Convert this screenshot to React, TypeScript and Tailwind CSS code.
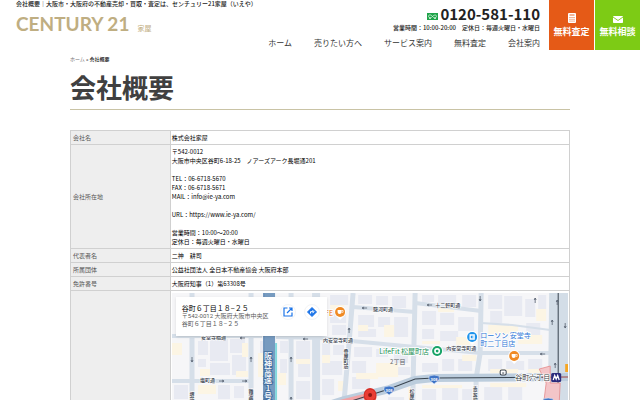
import React from 'react';

const navItems = [
  { text: 'ホーム', url: '#home' },
  { text: '売りたい方へ', url: '#sell' },
  { text: 'サービス案内', url: '#service' },
  { text: '無料査定', url: '#assessment' },
  { text: '会社案内', url: '#company' },
];

const address = [
  '〒542-0012',
  '大阪市中央区谷町6-18-25　ノアーズアーク長堀通201',
  '',
  'TEL：06-6718-5670',
  'FAX：06-6718-5671',
  'MAIL：info@ie-ya.com',
  '',
  'URL：https://www.ie-ya.com/',
  '',
  '営業時間：10:00〜20:00',
  '定休日：毎週火曜日・水曜日',
];

const rows = [
  { label: '会社名', lines: ['株式会社家屋'] },
  { label: '会社所在地', lines: address },
  { label: '代表者名', lines: ['二神　耕司'] },
  { label: '所属団体', lines: ['公益社団法人 全日本不動産協会 大阪府本部'] },
  { label: '免許番号', lines: ['大阪府知事（1）第63308号'] },
];

// x, y, width, height
const buildings = [
  [26, 48, 10, 14], [38, 46, 18, 22], [58, 46, 15, 14], [38, 70, 20, 12], [60, 62, 14, 20],
  [26, 66, 8, 8], [46, 92, 12, 14], [62, 93, 10, 12], [2, 92, 14, 14], [88, 48, 3, 22],
  [124, 48, 14, 18], [126, 70, 12, 14], [124, 88, 14, 18], [108, 48, 8, 12], [108, 66, 7, 14],
  [150, 50, 8, 14], [161, 52, 11, 10], [150, 68, 20, 14], [150, 86, 12, 16], [158, 2, 18, 10],
  [158, 18, 16, 12], [160, 32, 14, 10], [186, 2, 14, 9], [204, 3, 12, 9], [220, 3, 14, 12],
  [186, 22, 16, 12], [206, 24, 12, 10], [222, 24, 14, 20], [186, 36, 18, 8], [182, 54, 18, 10],
  [204, 56, 12, 8], [222, 58, 14, 12], [180, 68, 14, 12], [180, 84, 18, 12], [218, 74, 20, 8],
  [250, 2, 12, 7], [266, 2, 18, 10], [290, 2, 14, 12], [250, 18, 14, 14], [268, 20, 14, 12],
  [286, 24, 16, 14], [250, 36, 12, 10], [268, 38, 18, 10], [250, 70, 16, 9], [270, 66, 12, 12],
  [286, 66, 14, 12], [316, 2, 14, 14], [332, 3, 18, 20], [353, 6, 10, 18], [366, 2, 8, 14],
  [318, 18, 12, 12], [354, 30, 14, 12], [316, 66, 14, 12], [334, 68, 18, 9], [356, 66, 14, 12],
  [250, 96, 14, 12], [270, 94, 16, 14], [290, 96, 10, 12], [312, 94, 18, 14], [336, 94, 14, 14],
  [188, 108, 20, 20], [216, 104, 16, 14], [2, 112, 14, 20], [28, 110, 22, 20], [56, 112, 16, 18],
];

const shops = [
  [0, 50, 10, 12], [28, 76, 10, 7], [70, 50, 6, 14], [26, 92, 18, 9], [64, 78, 12, 6],
  [86, 60, 5, 24], [106, 80, 8, 12], [124, 66, 14, 5], [150, 62, 8, 8], [166, 88, 8, 10],
  [158, 12, 14, 5], [186, 32, 10, 6], [212, 32, 10, 12], [204, 70, 22, 14], [184, 80, 22, 6],
  [266, 12, 16, 7], [250, 48, 18, 3], [284, 44, 14, 8], [316, 32, 30, 9], [346, 42, 24, 9],
  [364, 16, 10, 12], [290, 62, 14, 6], [318, 76, 28, 4], [356, 76, 16, 4], [250, 92, 40, 3],
  [318, 90, 36, 4], [180, 110, 10, 20], [236, 94, 5, 12],
];

const arrows = [
  [20, 66, 'M0-2V3M-1 1L0 3L1 1'],
  [79, 66, 'M0 3V-2M-1 0L0-2L1 0'],
  [119, 66, 'M0 3V-2M-1 0L0-2L1 0'],
  [119, 106, 'M0 3V-2M-1 0L0-2L1 0'],
  [50, 88, 'M-3 0H2M0-1L2 0L0 1'],
  [73, 88, 'M-3 0H2M0-1L2 0L0 1'],
  [70, 45, 'M3 0H-2M0-1L-2 0L0 1'],
  [133, 46, 'M3 0H-2M0-1L-2 0L0 1'],
  [192, 15, 'M3 0H-2M0-1L-2 0L0 1'],
  [257, 12, 'M3 0H-2M0-1L-2 0L0 1'],
  [177, 37, 'M0 3V-2M-1 0L0-2L1 0'],
  [308, 5, 'M0-2V3M-1 1L0 3L1 1'],
  [363, 7, 'M0 3V-2M-1 0L0-2L1 0'],
  [385, 9, 'M0 3V-2M-1 0L0-2L1 0'],
  [380, 29, 'M0 3V-2M-1 0L0-2L1 0'],
  [393, 32, 'M0-2V3M-1 1L0 3L1 1'],
  [383, 72, 'M0 3V-2M-1 0L0-2L1 0'],
  [370, 61, 'M3 0H-2M0-1L-2 0L0 1'],
] as const;

const streets = [
  { text: '安堂寺橋通', x: 29, y: 46 },
  { text: '塩町通', x: 28, y: 89 },
  { text: '駿河町通', x: 201, y: 18 },
  { text: '十二軒町通', x: 263, y: 14 },
  { text: '内安堂寺町通', x: 151, y: 49 },
  { text: '内安堂寺町通', x: 274, y: 57 },
];

function Shield({ x, y }: { x: number; y: number }) {
  return (
    <g transform={`translate(${x} ${y})`}>
      <path d="M-5-3Q0-5 5-3Q6 0 4 2Q2 3 0 5Q-2 3-4 2Q-6 0-5-3Z" fill="#3f74c6" stroke="#dfe9f7" strokeWidth="0.6" />
      <text y="2" textAnchor="middle" className="text-[4px] font-bold" fill="#fff">308</text>
    </g>
  );
}

function Pin({ x, y, color, children }: { x: number; y: number; color: string; children: React.ReactNode }) {
  return (
    <g transform={`translate(${x} ${y})`}>
      <path d="M0 8L-3 5Q-6 3-6 0A6 6 0 0 1 6 0Q6 3 3 5Z" fill="#fff" />
      <circle r="5" fill={color} />
      {children}
    </g>
  );
}

function Cup() {
  return (
    <>
      <path d="M-2.500-2H1.500V0Q1.500 2-0.500 2Q-2.500 2-2.500 0Z" fill="#fff" />
      <path d="M1.500-1.500H3V0.300H1.500" fill="none" stroke="#fff" strokeWidth="0.7" />
    </>
  );
}

function MapDrawing() {
  return (
    <svg viewBox="0 0 396 225" className="block w-full" role="img" aria-label="谷町６丁目１８−２５の地図">
      <rect width="396" height="225" fill="#f6f6f8" />
      {buildings.map(([x, y, w, h], index) => (
        <rect key={index} x={x} y={y} width={w} height={h} fill="#e8eaf2" />
      ))}
      {shops.map(([x, y, w, h], index) => (
        <rect key={index} x={x} y={y} width={w} height={h} fill="#fcf5e4" />
      ))}

      {/* Side streets */}
      <g fill="none" stroke="#d6dfe9" strokeWidth="5">
        <path d="M20 0V225M79 0V225M119 0V225M181 0L177 50L172 108L168 225M243 0L241 87L239 225M309 0L308 60L304 85L302 225" />
        <path d="M144 0V225" strokeWidth="8" />
        <path d="M0 43H90M0 88H79M0 140H396" strokeWidth="4" />
        <path d="M181 14L243 19M243 10L309 18M104 44L148 45L243 54L309 60H378" strokeWidth="4" />
        <path d="M309 30L340 32L378 37" strokeWidth="2" />
      </g>
      <path d="M377 0H396V225H370L376 84Z" fill="#d3dde7" />

      {/* Expressway */}
      <path d="M97 0V225" stroke="#779bc0" strokeWidth="12" />
      <path d="M92 0V225" stroke="#6a90b8" strokeWidth="1" />
      <path d="M104 50V225" stroke="#83d8dc" strokeWidth="2" />

      {/* Route 308 and the subway line */}
      <path d="M150 114L172 107L217 96L243 87L262 85L396 84" fill="none" stroke="#bccddd" strokeWidth="8" />
      <path d="M148 114L200 101" stroke="#f2a4a6" strokeWidth="4" />
      <path d="M148 118L217 96L243 86L262 85L396 84" fill="none" stroke="#38434e" strokeWidth="1" />
      <path d="M386 0V84L382 225" fill="none" stroke="#38434e" strokeWidth="1" />
      <path d="M367 76L378 73V90H388L386 130L370 122L374 90Z" fill="#f3c5c8" stroke="#e58a8c" strokeWidth="0.8" />
      <path d="M396 71H393V79H396Z" fill="#f6a622" />
      <path d="M388 84H396" stroke="#e58a8c" strokeWidth="1" />

      {arrows.map(([x, y, d], index) => (
        <path key={index} d={d} transform={`translate(${x} ${y})`} fill="none" stroke="#55606e" strokeWidth="0.8" />
      ))}

      <g fill="#37414d" stroke="#fff" strokeWidth="1" paintOrder="stroke" className="text-[5px] font-medium">
        {streets.map((street, index) => (
          <text key={index} x={street.x} y={street.y}>{street.text}</text>
        ))}
        <text x="174" y="56" className="[writing-mode:vertical-rl]">骨屋町筋</text>
        <text x="240" y="96" className="[writing-mode:vertical-rl]">松屋町筋</text>
        <text x="303" y="93" className="[writing-mode:vertical-rl]">善安筋</text>
        <text x="20" y="99" className="[writing-mode:vertical-rl]">堺筋</text>
        <text x="79" y="96" className="[writing-mode:vertical-rl]">難波筋</text>
      </g>
      <text x="96" y="59" fill="#fff" stroke="#456f9f" strokeWidth="2" paintOrder="stroke" className="text-[8px] font-medium [text-orientation:upright] [writing-mode:vertical-rl]">
        阪神高速1号環状線
      </text>

      <Shield x={217} y={97} />
      <Shield x={262} y={86} />
      <Shield x={376} y={109} />

      {/* Places */}
      <g stroke="#fff" strokeWidth="1.5" paintOrder="stroke" className="text-[7px]">
        <text x="161" y="23" textAnchor="end" fill="#e8710a">CAFE</text>
        <text x="257" y="61" textAnchor="end" fill="#1b8f56">LifeFit 松屋町店</text>
        <text x="308" y="45" fill="#2f78d8">ローソン 安堂寺</text>
        <text x="308" y="53" fill="#2f78d8">町二丁目店</text>
        <text x="378" y="87" textAnchor="end" fill="#3c4043">谷町六丁目</text>
      </g>
      <text x="218" y="71" fill="#5f6368" className="text-[6px]">2丁目</text>

      <Pin x={168} y={19} color="#f08a24"><Cup /></Pin>
      <Pin x={342} y={63} color="#f08a24"><Cup /></Pin>
      <Pin x={265} y={58} color="#16a366">
        <circle r="2.2" fill="none" stroke="#fff" strokeWidth="1.6" />
      </Pin>
      <Pin x={300} y={44} color="#1e93ec">
        <path d="M-2-2H2L2 2H-2Z" fill="none" stroke="#fff" strokeWidth="1.3" />
        <path d="M0 0H2" stroke="#fff" />
      </Pin>

      <rect x="328" y="77" width="6" height="5" rx="1.5" fill="#fff" stroke="#37414d" />
      <path d="M330 80H332" stroke="#37414d" />
      <rect x="379" y="80" width="10" height="9" rx="1.5" fill="#2b2b7c" />
      <path d="M381 87L382.500 82.500L384 86L385.500 82.500L387 87" fill="none" stroke="#fff" strokeWidth="1.3" />

      <path d="M198 118L193 108Q191 105 192 101A6 6 0 0 1 204 101Q205 105 203 108Z" fill="#e53a33" />
      <circle cx="198" cy="102" r="6" fill="#ea3c34" stroke="#b9241f" strokeWidth="0.6" />
      <circle cx="198" cy="102" r="2" fill="#8f1713" />
    </svg>
  );
}

function MapCard() {
  return (
    <div className="absolute top-1 left-1 flex w-[151px] items-start bg-white pt-[7px] pr-1 pb-2 pl-[6px] text-[6px] leading-[8px] whitespace-nowrap text-[#5b5b5b] shadow-sm">
      <div className="w-[98px]">
        <p className="text-[7px] text-black">谷町６丁目１８−２５</p>
        <p className="font-['Roboto','Noto_Sans_CJK_JP',sans-serif]">〒542-0012 大阪府大阪市中央区</p>
        <p>谷町６丁目１８−２５</p>
      </div>
      <a href="#open-map" aria-label="拡大地図を表示" className="flex size-4 items-center justify-center rounded-full border border-gray-100">
        <svg viewBox="0 0 10 10" className="size-[10px]" fill="none" stroke="#1a73e8" strokeWidth="1.2">
          <path d="M4.500 1H1V9H9V5.500M6 1H9V4M9 1L4 6" />
        </svg>
      </a>
      <a href="#route" aria-label="ルート" className="ml-2 flex size-4 items-center justify-center rounded-full border border-gray-100">
        <svg viewBox="0 0 10 10" className="size-[10px]">
          <path d="M5 0.500L9.500 5L5 9.500L0.500 5Z" fill="#1a73e8" stroke="#1a73e8" strokeLinejoin="round" />
          <path d="M3.500 6.500V4.700H6.500M5.500 3.200L7 4.700L5.500 6.200" fill="none" stroke="#fff" />
        </svg>
      </a>
    </div>
  );
}

function App() {
  return (
    <div className="bg-white font-['Noto_Sans_CJK_JP',sans-serif] text-black">
      {/* Header */}
      <header className="flex items-start">
        <div className="shrink-0 pl-4 whitespace-nowrap">
          <p className="text-[6px] leading-[8px] font-medium text-[#222]">
            会社概要｜大阪市・大阪府の不動産売却・買取・査定は、センチュリー21家屋（いえや）
          </p>
          <a href="#home" className="mt-1 flex items-end gap-2 text-[#bfae82]">
            <span className="font-['Lato',sans-serif] text-[19px] leading-[24px] font-bold">CENTURY 21</span>
            <span className="pb-[3px] text-[7px] leading-[10px]">家屋</span>
          </a>
        </div>

        <div className="flex flex-1 flex-col items-end pt-1 pr-[9px] whitespace-nowrap">
          <div className="flex items-center gap-[2px] text-[#222]">
            <svg viewBox="0 0 11 7" className="mt-1 w-[11px]" aria-hidden="true">
              <rect width="11" height="7" fill="#1fa34a" />
              <path d="M5.500 3.500C4.500 1.500 1.500 1.300 1.500 3.300S4.500 5 5.500 3.500S9.500 1.300 9.500 3.300S6.500 5.200 5.500 3.500M2 5.500H4M7 5.500H9" fill="none" stroke="#d9f5df" strokeWidth="0.8" />
            </svg>
            <a href="tel:0120581110" className="text-[15px] leading-[20px] font-bold">0120-581-110</a>
          </div>
          <p className="text-[6px] leading-[8px] font-medium text-[#222]">
            営業時間：10:00-20:00　定休日：毎週火曜日・水曜日
          </p>
          <nav className="mt-[5px] flex gap-[22px] text-[8px] leading-[12px] text-[#333]">
            {navItems.map((item) => (
              <a key={item.text} href={item.url}>
                {item.text}
              </a>
            ))}
          </nav>
        </div>

        <div className="flex h-[50px] shrink-0 gap-px text-[9px] leading-[12px] font-bold text-white">
          <a href="#assessment" className="flex w-[45px] flex-col items-center bg-[#e55a17] pt-[13px]">
            <svg viewBox="0 0 8 10" className="h-[10px] w-2" aria-hidden="true">
              <rect width="8" height="10" rx="1" fill="#fff" />
              <path d="M1.500 2H6.500M1.500 4.500H2.500M3.500 4.500H4.500M5.500 4.500H6.500M1.500 6.300H2.500M3.500 6.300H4.500M5.500 6.300H6.500M1.500 8.100H2.500M3.500 8.100H4.500M5.500 8.100H6.500" stroke="#e55a17" strokeWidth="0.9" />
            </svg>
            <span className="mt-[3px]">無料査定</span>
          </a>
          <a href="#contact" className="flex w-[45px] flex-col items-center bg-[#7dcb15] pt-[16px]">
            <svg viewBox="0 0 10 7" className="h-[7px] w-[10px]" aria-hidden="true">
              <rect width="10" height="7" rx="0.8" fill="#fff" />
              <path d="M0 1L5 4.500L10 1" fill="none" stroke="#7dcb15" strokeWidth="0.9" />
            </svg>
            <span className="mt-[3px]">無料相談</span>
          </a>
        </div>
      </header>

      {/* Main Content */}
      <main className="px-[70px] pt-1">
        <p className="text-[5px] leading-[10px] text-[#222]">
          <a href="#home" className="text-[#777]">ホーム</a> » <span className="font-medium">会社概要</span>
        </p>
        <h1 className="mt-1 border-b border-[#c9c3a5] pb-1 text-[26px] leading-[37px] font-bold text-[#404040]">
          会社概要
        </h1>

        <table className="mt-5 w-full border-collapse text-[6px] leading-[9px]">
          <tbody>
            {rows.map((row) => (
              <tr key={row.label}>
                <th scope="row" className="w-1/5 border border-[#d0d0d0] bg-[#eeeeee] p-[2px] text-left font-normal text-[#555]">
                  {row.label}
                </th>
                <td className="border border-[#d0d0d0] px-px py-[2px]">
                  {row.lines.map((line, index) => (
                    <p key={index} className="min-h-[9px]">{line}</p>
                  ))}
                </td>
              </tr>
            ))}
            <tr>
              <th scope="row" aria-label="地図" className="border border-[#d0d0d0] bg-[#eeeeee]"></th>
              <td className="border border-[#d0d0d0] px-px py-[2px]">
                <div className="relative">
                  <MapDrawing />
                  <MapCard />
                </div>
              </td>
            </tr>
          </tbody>
        </table>
      </main>
    </div>
  );
}

export default App;
